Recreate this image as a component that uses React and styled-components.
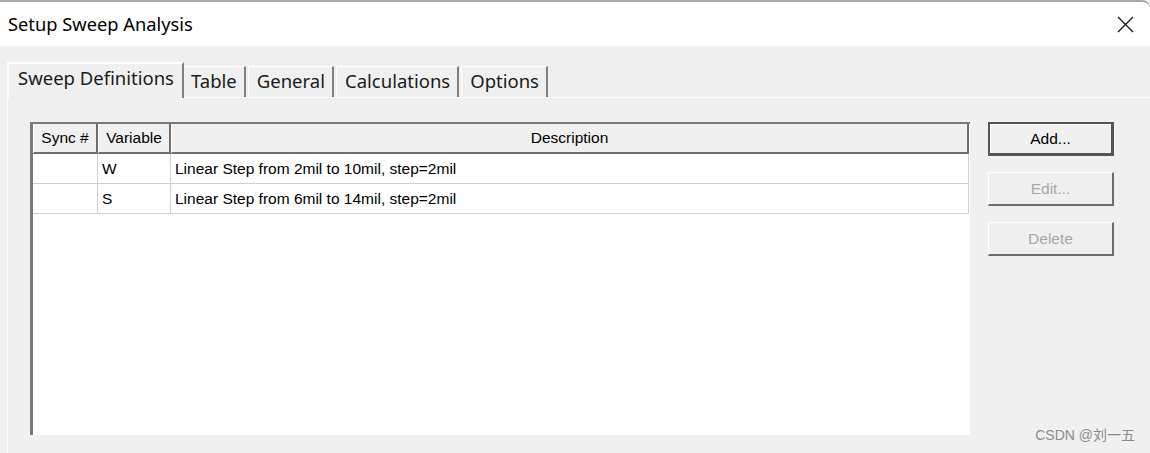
import React from 'react';
import styled, { createGlobalStyle, css } from 'styled-components';

const GlobalStyle = createGlobalStyle`
  html, body {
    margin: 0;
    padding: 0;
    background: #f0f0f0;
  }
  body {
    font-family: "Noto Sans", "Liberation Sans", sans-serif;
  }
`;

const Window = styled.div`
  width: 1150px;
  height: 453px;
  display: flex;
  flex-direction: column;
  box-sizing: border-box;
  border-top: 2px solid #a9a9a9;
  border-top-right-radius: 8px;
  background: #f0f0f0;
  overflow: hidden;
  position: relative;
`;

const TitleBar = styled.div`
  height: 44px;
  background: #fff;
  display: flex;
  align-items: center;
  justify-content: space-between;
  padding: 0 16px 0 8px;
  border-top-right-radius: 8px;
`;

const Title = styled.div`
  font-family: "Noto Sans", "Open Sans", sans-serif;
  font-size: 18.3px;
  color: #000;
  margin-top: -2px;
`;

const CloseBtn = styled.div`
  width: 18px;
  height: 18px;
  display: flex;
  align-items: center;
  justify-content: center;
`;

const Body = styled.div`
  flex: 1;
  padding: 16px 0 0 7px;
  display: flex;
  flex-direction: column;
`;

const TabRow = styled.div`
  display: flex;
  align-items: flex-end;
  height: 35px;
  position: relative;
  z-index: 1;
`;

const Tab = styled.div`
  box-sizing: border-box;
  font-family: "Noto Sans", "Open Sans", sans-serif;
  font-size: 18.5px;
  color: #1a1a1a;
  background: #f0f0f0;
  border-top: 1px solid #fff;
  border-left: 1px solid #fff;
  border-right: 2px solid #808080;
  height: 31px;
  padding: 0 7px 3px 8px;
  display: flex;
  align-items: center;
  margin-right: 2px;
  ${(p) =>
    p.$active &&
    css`
      position: relative;
      z-index: 2;
      height: 36px;
      padding: 0 8px 7px 9px;
      margin-right: -2px;
      border-top: 2px solid #fff;
      border-left: 2px solid #fff;
      margin-bottom: -1px;
    `}
`;

const Panel = styled.div`
  flex: 1;
  border-top: 1px solid #fff;
  border-left: 1px solid #fff;
  display: flex;
  padding: 24px 0 0 22px;
  gap: 18px;
`;

const Grid = styled.div`
  width: 940px;
  height: 313px;
  box-sizing: border-box;
  background: #fff;
  border-left: 3px solid #7a7a7a;
  border-top: 2px solid #7a7a7a;
  display: flex;
  flex-direction: column;
  align-self: flex-start;
`;

const HeadRow = styled.div`
  display: grid;
  grid-template-columns: 65px 73px 798px;
  height: 30px;
`;

const HeadCell = styled.div`
  box-sizing: border-box;
  background: #f0f0f0;
  border-right: 2px solid #6e6e6e;
  border-bottom: 2px solid #6e6e6e;
  border-left: 1px solid #fff;
  font-family: "Liberation Sans", Arial, sans-serif;
  font-size: 15.5px;
  color: #000;
  display: flex;
  align-items: center;
  justify-content: center;
`;

const Row = styled.div`
  display: grid;
  grid-template-columns: 65px 73px 798px;
  height: 30px;
`;

const Cell = styled.div`
  box-sizing: border-box;
  border-right: 1px solid #d0d0d0;
  border-bottom: 1px solid #d0d0d0;
  font-family: "Liberation Sans", Arial, sans-serif;
  font-size: 15.5px;
  color: #000;
  display: flex;
  align-items: center;
  padding-left: 4px;
`;

const Buttons = styled.div`
  display: flex;
  flex-direction: column;
  gap: 16px;
`;

const Button = styled.div`
  box-sizing: border-box;
  width: 126px;
  height: 34px;
  background: #f0f0f0;
  border-top: 1px solid #fff;
  border-left: 1px solid #fff;
  border-right: 2px solid #6e6e6e;
  border-bottom: 2px solid #6e6e6e;
  font-family: "Liberation Sans", Arial, sans-serif;
  font-size: 15.5px;
  color: ${(p) => (p.$disabled ? '#a8a8a8' : '#000')};
  display: flex;
  align-items: center;
  justify-content: center;
  ${(p) =>
    p.$default &&
    css`
      border: 2px solid #555;
      border-right-width: 3px;
      border-bottom-width: 3px;
      box-shadow: inset 1px 1px 0 #fff;
    `}
`;

const Watermark = styled.div`
  position: absolute;
  right: 15px;
  bottom: 9px;
  font-family: "Liberation Sans", "Noto Sans CJK SC", sans-serif;
  font-size: 14px;
  color: #8c8c8c;
`;

const rows = [
  { sync: '', variable: 'W', desc: 'Linear Step from 2mil to 10mil, step=2mil' },
  { sync: '', variable: 'S', desc: 'Linear Step from 6mil to 14mil, step=2mil' },
];

const tabs = ['Sweep Definitions', 'Table', 'General', 'Calculations', 'Options'];

export default function App() {
  return (
    <>
      <GlobalStyle />
      <Window>
        <TitleBar>
          <Title>Setup Sweep Analysis</Title>
          <CloseBtn>
            <svg width="17" height="17" viewBox="0 0 17 17">
              <path d="M1 1 L16 16 M16 1 L1 16" stroke="#1a1a1a" strokeWidth="1.4" />
            </svg>
          </CloseBtn>
        </TitleBar>
        <Body>
          <TabRow>
            {tabs.map((t, i) => (
              <Tab key={t} $active={i === 0}>
                {t}
              </Tab>
            ))}
          </TabRow>
          <Panel>
            <Grid>
              <HeadRow>
                <HeadCell>Sync #</HeadCell>
                <HeadCell>Variable</HeadCell>
                <HeadCell>Description</HeadCell>
              </HeadRow>
              {rows.map((r) => (
                <Row key={r.variable}>
                  <Cell>{r.sync}</Cell>
                  <Cell>{r.variable}</Cell>
                  <Cell>{r.desc}</Cell>
                </Row>
              ))}
            </Grid>
            <Buttons>
              <Button $default>Add...</Button>
              <Button $disabled>Edit...</Button>
              <Button $disabled>Delete</Button>
            </Buttons>
          </Panel>
        </Body>
        <Watermark>CSDN @刘一五</Watermark>
      </Window>
    </>
  );
}
